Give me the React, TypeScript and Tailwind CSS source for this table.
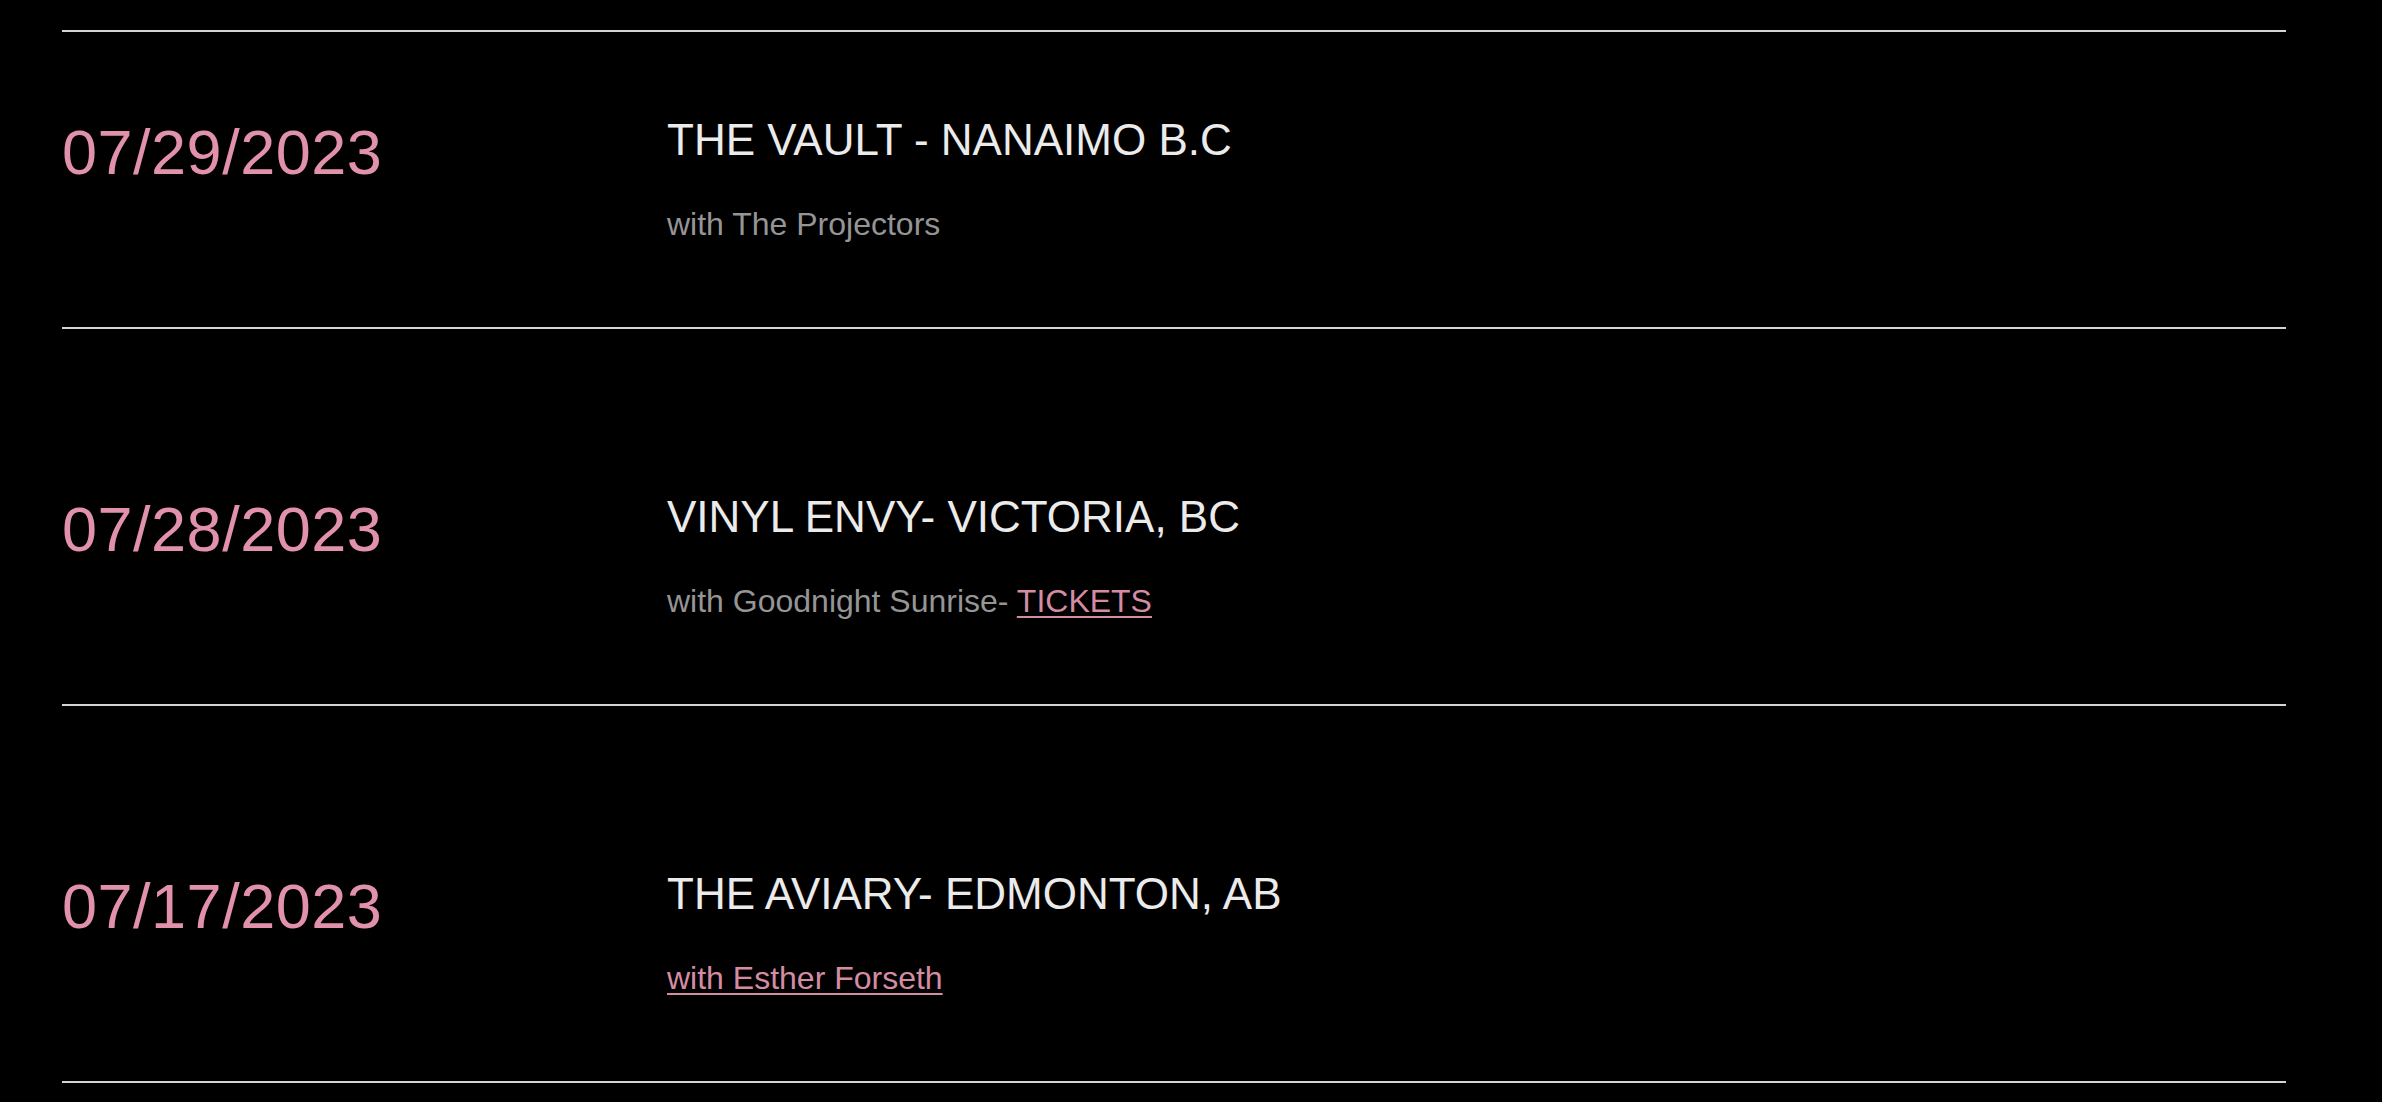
const shows = [
  {
    date: "07/29/2023",
    venue: "THE VAULT - NANAIMO B.C",
    first: true,
    sub: <span className="text-[#959595]">with The Projectors</span>,
  },
  {
    date: "07/28/2023",
    venue: "VINYL ENVY- VICTORIA, BC",
    sub: (
      <span className="text-[#959595]">
        with Goodnight Sunrise-{" "}
        <a href="#" className="text-[#d48ca3] underline decoration-2 underline-offset-[4px]">
          TICKETS
        </a>
      </span>
    ),
  },
  {
    date: "07/17/2023",
    venue: "THE AVIARY- EDMONTON, AB",
    sub: (
      <a href="#" className="text-[#d48ca3] underline decoration-2 underline-offset-[4px]">
        with Esther Forseth
      </a>
    ),
  },
];

export default function App() {
  return (
    <main className="min-h-screen w-full bg-black pt-[30px] font-['Liberation_Sans',Arial,sans-serif]">
      <div className="ml-[62px] w-[2224px] border-b-2 border-[#d4d4d4]">
        {shows.map((s) => (
          <div
            key={s.date}
            className={
              "flex border-t-2 border-[#d4d4d4] pb-[87px] " +
              (s.first ? "pt-[86px]" : "pt-[166px]")
            }
          >
            <div className="w-[605px] shrink-0 pt-[3px] text-[63px] leading-[63px] tracking-[0.5px] text-[#e291ab]">
              {s.date}
            </div>
            <div className="flex flex-col gap-[46px]">
              <h2 className="text-[44px] leading-[44px] text-[#ebebeb]">{s.venue}</h2>
              <p className="text-[32px] leading-[32px]">{s.sub}</p>
            </div>
          </div>
        ))}
      </div>
    </main>
  );
}
